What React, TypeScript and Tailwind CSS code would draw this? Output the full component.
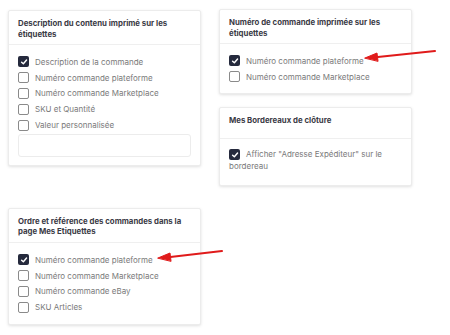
import React from "react";

const font = { fontFamily: '"Inter", "Liberation Sans", sans-serif' };

function Box({ checked }: { checked?: boolean }) {
  return checked ? (
    <span className="inline-flex h-[11px] w-[11px] shrink-0 items-center justify-center rounded-[2px] bg-[#252a3d]">
      <svg width="8" height="8" viewBox="0 0 10 10">
        <path d="M2 5.2 L4.2 7.3 L8.2 2.6" stroke="white" strokeWidth="1.8" fill="none" strokeLinecap="round" strokeLinejoin="round" />
      </svg>
    </span>
  ) : (
    <span className="inline-block h-[11px] w-[11px] shrink-0 rounded-[2px] border border-[#8a8a8a] bg-white" />
  );
}

function Row({ label, checked }: { label: string; checked?: boolean }) {
  return (
    <div className="flex h-[15.8px] items-center gap-[6px]">
      <Box checked={checked} />
      <span className="text-[8px] text-[#7a7a7a]">{label}</span>
    </div>
  );
}

function Card({ title, children, className = "", headH = "h-[34px]", bodyPad = "pb-[8px]" }: { title: React.ReactNode; children: React.ReactNode; className?: string; headH?: string; bodyPad?: string }) {
  return (
    <div className={"rounded-[2px] border border-[#ececec] bg-white shadow-[0_1px_3px_rgba(0,0,0,0.12)] " + className}>
      <div className={"border-b border-[#efefef] px-[9px] pt-[7px] " + headH}>
        <div className="text-[7.8px] font-bold leading-[10.5px] text-[#3a3a45]">{title}</div>
      </div>
      <div className={"px-[9px] pt-[9px] " + bodyPad}>{children}</div>
    </div>
  );
}

export default function App() {
  return (
    <div className="relative h-[335px] w-[450px] bg-white" style={font}>
      <div className="flex gap-[18px] pl-[8px]">
        <div className="flex w-[193px] flex-col pt-[10px]">
          <Card title={<>Description du contenu imprimé sur les<br />étiquettes</>}>
            <Row label="Description de la commande" checked />
            <Row label="Numéro commande plateforme" />
            <Row label="Numéro commande Marketplace" />
            <Row label="SKU et Quantité" />
            <Row label="Valeur personnalisée" />
            <div className="mt-[1px] h-[23px] rounded-[3px] border border-[#ececec]" />
          </Card>
          <Card className="mt-[42px]" bodyPad="pb-[9px]" title={<>Ordre et référence des commandes dans la<br />page Mes Etiquettes</>}>
            <Row label="Numéro commande plateforme" checked />
            <Row label="Numéro commande Marketplace" />
            <Row label="Numéro commande eBay" />
            <Row label="SKU Articles" />
          </Card>
        </div>
        <div className="flex w-[193px] flex-col pt-[9px]">
          <Card title={<>Numéro de commande imprimée sur les<br />étiquettes</>}>
            <Row label="Numéro commande plateforme" checked />
            <Row label="Numéro commande Marketplace" />
          </Card>
          <Card className="mt-[13px]" headH="h-[31px]" bodyPad="pb-[13px]" title="Mes Bordereaux de clôture">
            <div className="pt-[1px] text-[8px] leading-[10.5px] text-[#7a7a7a]">
              <span className="mr-[6px] inline-block align-[-2px]"><Box checked /></span>
              Afficher "Adresse Expéditeur" sur le
              <br />
              bordereau
            </div>
          </Card>
        </div>
      </div>
      <svg className="pointer-events-none absolute left-0 top-0" width="450" height="335">
        <g fill="#e01b1b" stroke="#e01b1b" strokeWidth="2" strokeLinecap="round">
          <line x1="435" y1="51" x2="373" y2="57.5" />
          <polygon points="365,58 377,53 378,61" strokeWidth="1" strokeLinejoin="round" />
          <line x1="222" y1="251" x2="166" y2="257.5" />
          <polygon points="158,258 170,253 171,261" strokeWidth="1" strokeLinejoin="round" />
        </g>
      </svg>
    </div>
  );
}
